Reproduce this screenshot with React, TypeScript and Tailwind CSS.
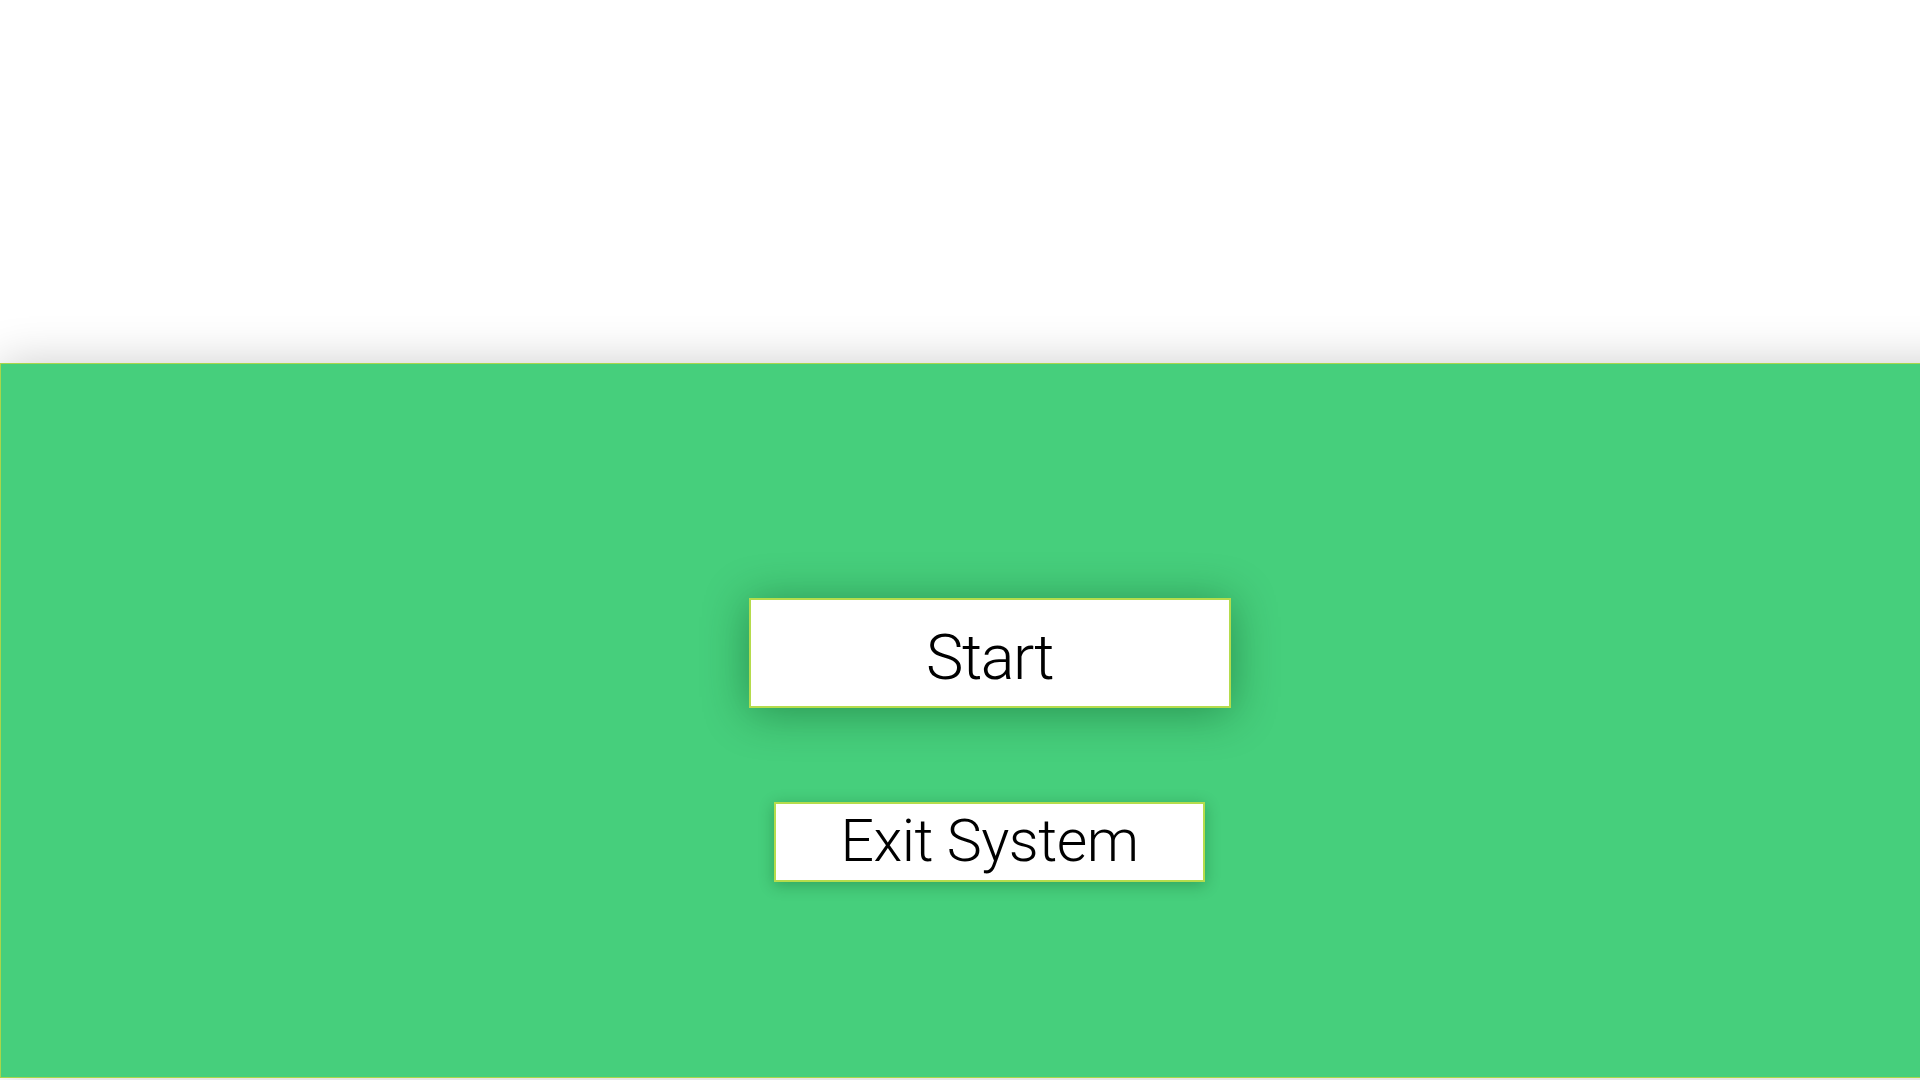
export default function App() {
  return (
    <div className="w-[1920px] h-[1080px] overflow-hidden bg-white flex flex-col">
      <div className="h-[363px] shrink-0" />
      <div className="w-[1979px] h-[715px] shrink-0 bg-[#46cf7c] border border-[#a9d64a] shadow-[0_0_45px_rgba(0,0,0,0.2)] flex flex-col items-center pt-[234px]">
        <button className="w-[482px] h-[110px] bg-white border-2 border-[#b5dc4c] shadow-[0_4px_45px_rgba(0,60,20,0.42)] flex items-center justify-center pt-[9px] text-[63px] leading-none tracking-[-1.5px] text-black font-light [font-family:Roboto,sans-serif]">
          Start
        </button>
        <button className="mt-[94px] w-[431px] h-[80px] bg-white border-2 border-[#b5dc4c] shadow-[0_3px_14px_rgba(0,60,20,0.3)] flex items-center justify-center pb-[4px] text-[59px] leading-none tracking-[-0.5px] text-black font-light [font-family:Roboto,sans-serif]">
          Exit System
        </button>
      </div>
    </div>
  );
}
